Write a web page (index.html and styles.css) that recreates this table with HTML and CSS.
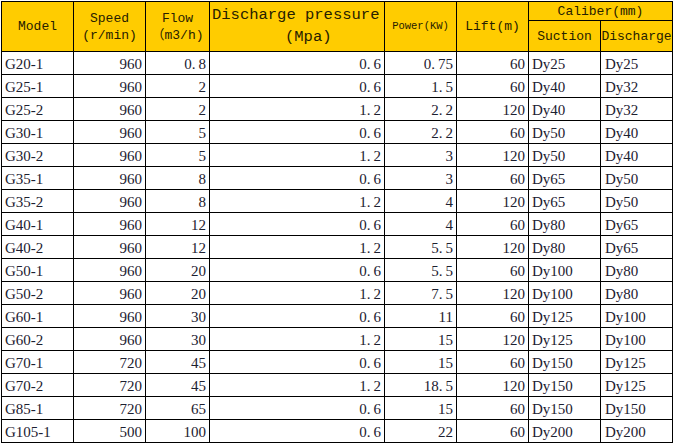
FILE: index.html
```html
<!DOCTYPE html>
<html lang="en">
<head>
<meta charset="utf-8">
<title>Pump specifications</title>
<link rel="stylesheet" href="styles.css">
</head>
<body>
<table class="pump">
  <colgroup>
    <col class="c-model"><col class="c-speed"><col class="c-flow"><col class="c-press"><col class="c-power"><col class="c-lift"><col class="c-suct"><col class="c-dis">
  </colgroup>
  <thead>
    <tr class="h1">
      <th rowspan="2">Model</th>
      <th rowspan="2">Speed<br>(r/min)</th>
      <th rowspan="2">Flow<br>（m3/h)</th>
      <th rowspan="2" class="press"><span class="big">Discharge pressure</span><span class="unit">(Mpa)</span></th>
      <th rowspan="2" class="small">Power(KW)</th>
      <th rowspan="2">Lift(m)</th>
      <th colspan="2">Caliber(mm)</th>
    </tr>
    <tr class="h2">
      <th>Suction</th>
      <th>Discharge</th>
    </tr>
  </thead>
  <tbody>
    <tr><td>G20-1</td><td class="n">960</td><td class="n">0<span class="d">.</span>8</td><td class="n">0<span class="d">.</span>6</td><td class="n">0<span class="d">.</span>75</td><td class="n">60</td><td>Dy25</td><td class="dis">Dy25</td></tr>
    <tr><td>G25-1</td><td class="n">960</td><td class="n">2</td><td class="n">0<span class="d">.</span>6</td><td class="n">1<span class="d">.</span>5</td><td class="n">60</td><td>Dy40</td><td class="dis">Dy32</td></tr>
    <tr><td>G25-2</td><td class="n">960</td><td class="n">2</td><td class="n">1<span class="d">.</span>2</td><td class="n">2<span class="d">.</span>2</td><td class="n">120</td><td>Dy40</td><td class="dis">Dy32</td></tr>
    <tr><td>G30-1</td><td class="n">960</td><td class="n">5</td><td class="n">0<span class="d">.</span>6</td><td class="n">2<span class="d">.</span>2</td><td class="n">60</td><td>Dy50</td><td class="dis">Dy40</td></tr>
    <tr><td>G30-2</td><td class="n">960</td><td class="n">5</td><td class="n">1<span class="d">.</span>2</td><td class="n">3</td><td class="n">120</td><td>Dy50</td><td class="dis">Dy40</td></tr>
    <tr><td>G35-1</td><td class="n">960</td><td class="n">8</td><td class="n">0<span class="d">.</span>6</td><td class="n">3</td><td class="n">60</td><td>Dy65</td><td class="dis">Dy50</td></tr>
    <tr><td>G35-2</td><td class="n">960</td><td class="n">8</td><td class="n">1<span class="d">.</span>2</td><td class="n">4</td><td class="n">120</td><td>Dy65</td><td class="dis">Dy50</td></tr>
    <tr><td>G40-1</td><td class="n">960</td><td class="n">12</td><td class="n">0<span class="d">.</span>6</td><td class="n">4</td><td class="n">60</td><td>Dy80</td><td class="dis">Dy65</td></tr>
    <tr><td>G40-2</td><td class="n">960</td><td class="n">12</td><td class="n">1<span class="d">.</span>2</td><td class="n">5<span class="d">.</span>5</td><td class="n">120</td><td>Dy80</td><td class="dis">Dy65</td></tr>
    <tr><td>G50-1</td><td class="n">960</td><td class="n">20</td><td class="n">0<span class="d">.</span>6</td><td class="n">5<span class="d">.</span>5</td><td class="n">60</td><td>Dy100</td><td class="dis">Dy80</td></tr>
    <tr><td>G50-2</td><td class="n">960</td><td class="n">20</td><td class="n">1<span class="d">.</span>2</td><td class="n">7<span class="d">.</span>5</td><td class="n">120</td><td>Dy100</td><td class="dis">Dy80</td></tr>
    <tr><td>G60-1</td><td class="n">960</td><td class="n">30</td><td class="n">0<span class="d">.</span>6</td><td class="n">11</td><td class="n">60</td><td>Dy125</td><td class="dis">Dy100</td></tr>
    <tr><td>G60-2</td><td class="n">960</td><td class="n">30</td><td class="n">1<span class="d">.</span>2</td><td class="n">15</td><td class="n">120</td><td>Dy125</td><td class="dis">Dy100</td></tr>
    <tr><td>G70-1</td><td class="n">720</td><td class="n">45</td><td class="n">0<span class="d">.</span>6</td><td class="n">15</td><td class="n">60</td><td>Dy150</td><td class="dis">Dy125</td></tr>
    <tr><td>G70-2</td><td class="n">720</td><td class="n">45</td><td class="n">1<span class="d">.</span>2</td><td class="n">18<span class="d">.</span>5</td><td class="n">120</td><td>Dy150</td><td class="dis">Dy125</td></tr>
    <tr><td>G85-1</td><td class="n">720</td><td class="n">65</td><td class="n">0<span class="d">.</span>6</td><td class="n">15</td><td class="n">60</td><td>Dy150</td><td class="dis">Dy150</td></tr>
    <tr><td>G105-1</td><td class="n">500</td><td class="n">100</td><td class="n">0<span class="d">.</span>6</td><td class="n">22</td><td class="n">60</td><td>Dy200</td><td class="dis">Dy200</td></tr>
  </tbody>
</table>
</body>
</html>
```

FILE: styles.css
```css
html, body {
  margin: 0;
  padding: 0;
  background: #ffffff;
}

.pump {
  border-collapse: collapse;
  table-layout: fixed;
  width: 672px;
  margin: 1px 0 0 1px;
  font-family: "Liberation Serif", "Noto Sans CJK SC", serif;
  font-size: 15px;
  color: #1c2030;
}

.c-model, .c-speed, .c-power, .c-lift, .c-suct, .c-dis { width: 72px; }
.c-flow { width: 64px; }
.c-press { width: 175px; }

.pump th,
.pump td {
  border: 1px solid #000;
  padding: 0 3px;
  white-space: nowrap;
  overflow: hidden;
}

.pump thead th {
  background: #ffcc00;
  font-weight: normal;
  font-family: "Liberation Mono", "Noto Sans CJK SC", monospace;
  font-size: 13px;
  line-height: 17px;
  color: #262000;
  text-align: center;
  vertical-align: middle;
  padding: 0;
}

.pump .h1 th { height: 18px; }
.pump .h2 th { height: 30px; }

.pump th.press {
  text-align: left;
  vertical-align: top;
}

.press .big {
  display: block;
  font-size: 15.5px;
  line-height: 18px;
  padding: 4px 0 0 2px;
}

.press .unit {
  display: block;
  font-size: 15.5px;
  line-height: 20px;
  padding: 3px 0 0 75px;
}

.pump th.small {
  font-size: 10.5px;
}

.pump tbody td {
  height: 21px;
  padding: 0 3px 1px;
  vertical-align: bottom;
  line-height: 17px;
}

.pump td.n { text-align: right; }
.pump td.dis { padding-left: 4px; }

.d { padding-right: 3px; }
```
